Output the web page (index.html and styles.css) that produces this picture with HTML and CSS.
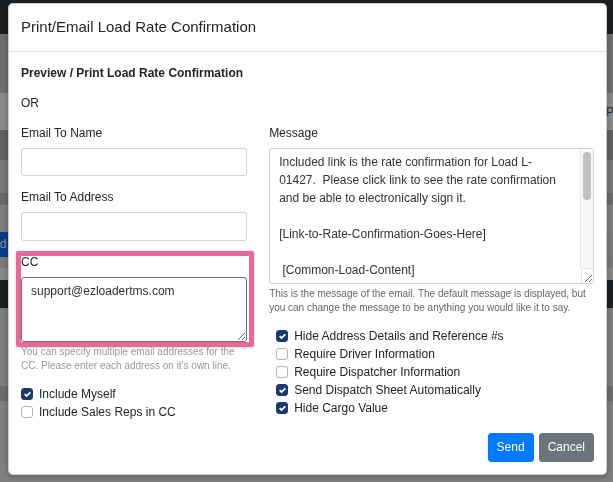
FILE: index.html
```html
<!DOCTYPE html>
<html>
<head>
    <title>Print/Email Load Rate Confirmation</title>
    <link rel="stylesheet" href="styles.css">
</head>
<body>
    <!-- page behind the dialog -->
    <div class="page">
        <div class="navbar"></div>
        <div class="band band-a"></div>
        <div class="band band-b"><span class="page-text">Pickup</span></div>
        <div class="band band-c"></div>
        <div class="band band-d"></div>
        <div class="band band-e"></div>
        <div class="band band-f"></div>
        <div class="band band-g"><span class="page-btn">Add</span></div>
        <div class="band band-h"></div>
        <div class="band band-i"></div>
        <div class="band band-dark"></div>
        <div class="band band-j"></div>
        <div class="band band-k"></div>
        <div class="band band-l"></div>
    </div>
    <div class="backdrop"></div>

    <div class="modal">
        <div class="modal-content">
            <div class="modal-header">
                <h5 class="modal-title">Print/Email Load Rate Confirmation</h5>
            </div>
            <div class="modal-body">
                <div class="form-group">
                    <a class="preview-link">Preview / Print Load Rate Confirmation</a>
                </div>
                <div class="form-group">OR</div>

                <div class="row">
                    <div class="col col-5">
                        <div class="form-group">
                            <label>Email To Name</label>
                            <input type="text" class="form-control">
                        </div>
                        <div class="form-group">
                            <label>Email To Address</label>
                            <input type="text" class="form-control">
                        </div>
                        <div class="form-group">
                            <div class="cc-box">
                                <label>CC</label>
                                <textarea class="form-control cc">support@ezloadertms.com</textarea>
                                <span class="highlight"></span>
                            </div>
                            <small class="form-text light">You can specify multiple email addresses for the CC. Please enter each address on it's own line.</small>
                        </div>
                        <div class="checks">
                            <label class="check"><input type="checkbox" checked>Include Myself</label>
                            <label class="check"><input type="checkbox">Include Sales Reps in CC</label>
                        </div>
                    </div>

                    <div class="col col-7">
                        <div class="form-group">
                            <label>Message</label>
                            <div class="message-box">
                                <textarea class="form-control message">Included link is the rate confirmation for Load L-&#8203;01427.  Please click link to see the rate confirmation and be able to electronically sign it.

[Link-to-Rate-Confirmation-Goes-Here]

 [Common-Load-Content]

Thank you for your business.

[Company-Signature]</textarea>
                                <!-- scrollbar drawn by hand, the headless browser hides native ones -->
                                <div class="scrollbar"><div class="thumb"></div></div>
                                <div class="scroll-corner"></div>
                            </div>
                            <small class="form-text">This is the message of the email. The default message is displayed, but you can change the message to be anything you would like it to say.</small>
                        </div>
                        <div class="checks indent">
                            <label class="check"><input type="checkbox" checked>Hide Address Details and Reference #s</label>
                            <label class="check"><input type="checkbox">Require Driver Information</label>
                            <label class="check"><input type="checkbox">Require Dispatcher Information</label>
                            <label class="check"><input type="checkbox" checked>Send Dispatch Sheet Automatically</label>
                            <label class="check"><input type="checkbox" checked>Hide Cargo Value</label>
                        </div>
                    </div>
                </div>

                <div class="actions">
                    <button class="btn btn-primary">Send</button>
                    <button class="btn btn-secondary">Cancel</button>
                </div>
            </div>
        </div>
    </div>
</body>
</html>
```

FILE: styles.css
```css
body {
    margin: 0;
    font-family: 'Liberation Sans', Arial, sans-serif;
    font-size: 12px;
    line-height: 1.5;
    color: #212529;
    overflow: hidden;
}

/* page behind the dialog */
.page {
    height: 482px;
    background: #ebebeb;
}

.navbar { height: 34px; background: #343a40; }
.band { display: flex; align-items: center; }
.band-a { height: 59px; background: #cdcdcd; }
.band-b { height: 37px; background: #fff; }
.band-c { height: 30px; background: #b2b2b2; }
.band-d { height: 33px; background: #e2e2e2; }
.band-e { height: 12px; background: #c5c5c5; }
.band-f { height: 27px; background: #ebebeb; }
.band-g { height: 25px; background: #e6e6e6; }
.band-h { height: 11px; background: #e2e2e2; }
.band-i { height: 12px; background: #fafafa; }
.band-dark { height: 28px; background: #343a40; }
.band-j { height: 77px; background: #ebebeb; border-top: 1px solid #dcdcdc; }
.band-k { height: 15px; background: #c8c8c8; }
.band-l { height: 82px; background: #ebebeb; }

.page-text {
    margin-left: 606px;
    color: #555;
    white-space: nowrap;
}

.page-btn {
    height: 100%;
    margin-left: -15px;
    padding-right: 40px;
    background: #0d6efd;
    color: #fff;
    line-height: 25px;
}

.backdrop {
    position: fixed;
    inset: 0;
    background: rgba(0, 0, 0, 0.46);
}

/* dialog */
.modal {
    position: absolute;
    top: 3px;
    left: 8px;
    width: 599px;
}

.modal-content {
    background: #fff;
    border: 1px solid rgba(0,0,0,0.2);
    border-radius: 5px;
    box-shadow: 0 2px 6px rgba(0,0,0,0.25);
}

.modal-header {
    padding: 12px;
    border-bottom: 1px solid #dee2e6;
}

.modal-title {
    margin: 0;
    font-size: 15px;
    font-weight: normal;
    line-height: 1.5;
}

.modal-body {
    padding: 12px;
}

.form-group {
    margin-bottom: 12px;
}

.preview-link {
    font-weight: bold;
    color: #212529;
}

.row {
    display: flex;
    margin: 0 -11.25px;
}

.col {
    padding: 0 11.25px;
    box-sizing: border-box;
}

.col-5 { flex: 0 0 41.6667%; }
.col-7 { flex: 0 0 58.3333%; }

label {
    display: block;
    margin-bottom: 6px;
}

.form-control {
    display: block;
    width: 100%;
    height: 28.5px;
    box-sizing: border-box;
    padding: 4.5px 9px;
    font: inherit;
    font-size: 12px;
    line-height: 1.5;
    color: #495057;
    background: #fff;
    border: 1px solid #ced4da;
    border-radius: 3px;
    outline: none;
}

textarea.form-control {
    resize: vertical;
}

.cc-box {
    position: relative;
}

.cc {
    height: 65px;
    border-color: #6e6e6e;
    color: #333;
}

/* pink marker round the CC field */
.highlight {
    position: absolute;
    top: -2px;
    left: -5px;
    right: -7px;
    bottom: -5px;
    border: 5px solid #e6699a;
    border-radius: 2px;
    box-shadow: 0 0 2px rgba(230,105,154,0.6);
    pointer-events: none;
}

.message-box {
    position: relative;
}

.message {
    height: 136px;
    padding-right: 32px;
    overflow: hidden;
    color: #333;
}

.scrollbar {
    position: absolute;
    top: 1px;
    right: 1px;
    bottom: 16px;
    width: 12px;
    background: #f8f8f8;
    border-left: 1px solid #e6e6e6;
    border-top-right-radius: 2px;
    pointer-events: none;
}

.thumb {
    height: 48px;
    margin: 3px 2px 0 2px;
    background: #c1c1c1;
    border-radius: 4px;
}

.scroll-corner {
    position: absolute;
    right: 1px;
    bottom: 1px;
    width: 12px;
    height: 15px;
    border-top: 1px solid #e6e6e6;
    border-left: 1px solid #e6e6e6;
    box-sizing: border-box;
    pointer-events: none;
}

.form-text {
    display: block;
    margin-top: 3px;
    font-size: 10px;
    line-height: 14.4px;
    color: #666;
}

.form-text.light {
    color: #999;
}

.checks.indent {
    margin-left: 7px;
}

.check {
    display: flex;
    align-items: center;
    margin: 0;
    line-height: 18px;
    white-space: nowrap;
}

.check input {
    appearance: none;
    -webkit-appearance: none;
    width: 12px;
    height: 12px;
    margin: 0 6px 0 0;
    flex: none;
    background: #fff;
    border: 1px solid #adb5bd;
    border-radius: 3px;
}

.check input:checked {
    background: #1b3a6b url("data:image/svg+xml,%3csvg xmlns='http://www.w3.org/2000/svg' width='8' height='8' viewBox='0 0 8 8'%3e%3cpath fill='%23fff' d='M6.564.75l-3.59 3.612-1.538-1.55L0 4.26 2.974 7.25 8 2.193z'/%3e%3c/svg%3e") center / 7px no-repeat;
    border-color: #1b3a6b;
}

.actions {
    display: flex;
    justify-content: flex-end;
    gap: 5px;
    margin-top: 11.5px;
}

.btn {
    font: inherit;
    font-size: 12px;
    line-height: 1.5;
    padding: 4.5px 8px;
    border: 1px solid transparent;
    border-radius: 3px;
    color: #fff;
    cursor: pointer;
}

.btn-primary { background: #007bff; border-color: #007bff; }
.btn-secondary { background: #6c757d; border-color: #6c757d; }
```
